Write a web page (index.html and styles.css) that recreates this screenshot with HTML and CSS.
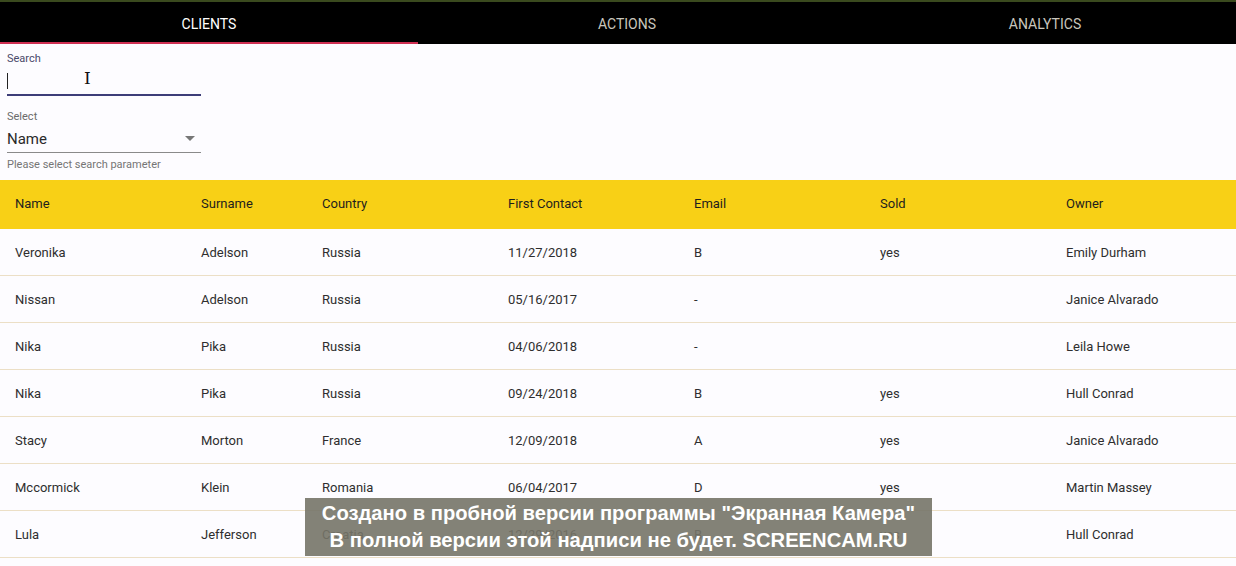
FILE: index.html
```html
<!DOCTYPE html>
<html>
<head>
<meta charset="utf-8">
<link rel="stylesheet" href="styles.css">
</head>
<body>
<div class="page">
  <nav class="tabs">
    <div class="tab active">Clients</div>
    <div class="tab">Actions</div>
    <div class="tab">Analytics</div>
  </nav>
  <form class="filters">
    <div class="field">
      <label class="label label-search">Search</label>
      <div class="input-row input-active"><span class="caret"></span><span class="ibeam">I</span></div>
    </div>
    <div class="field field-select">
      <label class="label">Select</label>
      <div class="input-row select-row"><span class="select-value">Name</span><span class="arrow"></span></div>
      <div class="helper">Please select search parameter</div>
    </div>
  </form>
  <table class="grid">
    <colgroup>
      <col class="c-wide"><col class="c-narrow"><col class="c-wide"><col class="c-wide"><col class="c-wide"><col class="c-wide"><col>
    </colgroup>
    <thead>
      <tr><th>Name</th><th>Surname</th><th>Country</th><th>First Contact</th><th>Email</th><th>Sold</th><th>Owner</th></tr>
    </thead>
    <tbody>
      <tr><td>Veronika</td><td>Adelson</td><td>Russia</td><td>11/27/2018</td><td>B</td><td>yes</td><td>Emily Durham</td></tr>
      <tr><td>Nissan</td><td>Adelson</td><td>Russia</td><td>05/16/2017</td><td>-</td><td></td><td>Janice Alvarado</td></tr>
      <tr><td>Nika</td><td>Pika</td><td>Russia</td><td>04/06/2018</td><td>-</td><td></td><td>Leila Howe</td></tr>
      <tr><td>Nika</td><td>Pika</td><td>Russia</td><td>09/24/2018</td><td>B</td><td>yes</td><td>Hull Conrad</td></tr>
      <tr><td>Stacy</td><td>Morton</td><td>France</td><td>12/09/2018</td><td>A</td><td>yes</td><td>Janice Alvarado</td></tr>
      <tr><td>Mccormick</td><td>Klein</td><td>Romania</td><td>06/04/2017</td><td>D</td><td>yes</td><td>Martin Massey</td></tr>
      <tr><td>Lula</td><td>Jefferson</td><td>Croatia</td><td>12/29/2016</td><td>B</td><td>yes</td><td>Hull Conrad</td></tr>
    </tbody>
  </table>
  <div class="watermark">
    <div>Создано в пробной версии программы "Экранная Камера"</div>
    <div>В полной версии этой надписи не будет. SCREENCAM.RU</div>
  </div>
</div>
</body>
</html>
```
FILE: styles.css
```css
html, body {
  margin: 0;
  padding: 0;
  background: #fdfcff;
  overflow: hidden;
}
.page {
  position: relative;
  width: 1236px;
  height: 566px;
  overflow: hidden;
  font-family: Roboto, "Liberation Sans", Arial, sans-serif;
  color: #2a2a2a;
}
.tabs {
  display: grid;
  grid-template-columns: 418px 418px 418px;
  height: 42px;
  background: #000;
  border-top: 2px solid #3a4a1e;
}
.tab {
  display: flex;
  align-items: center;
  justify-content: center;
  text-transform: uppercase;
  font-size: 14px;
  color: #c9c6bc;
  padding-top: 3px;
  border-bottom: 2px solid transparent;
}
.tab.active {
  color: #fff;
  border-bottom-color: #cf2f52;
}
.filters {
  display: flex;
  flex-direction: column;
  padding: 8px 0 0 7px;
  height: 129px;
  box-sizing: border-box;
  margin: 0;
}
.field {
  width: 194px;
}
.label {
  display: block;
  font-size: 11px;
  line-height: 13px;
  color: #6b6b6b;
}
.label-search {
  color: #4a4a6a;
}
.input-row {
  height: 27px;
  position: relative;
  border-bottom: 1px solid #8a8a8a;
  display: flex;
  align-items: center;
}
.input-active {
  height: 27px;
  border-bottom: 2px solid #3d3d78;
  margin-top: 2px;
}
.caret {
  width: 1px;
  height: 16px;
  background: #222;
  margin-top: 0;
}
.ibeam {
  position: absolute;
  left: 77px;
  top: 3px;
  font-family: "DejaVu Serif", serif;
  font-size: 17px;
  color: #111;
  line-height: 17px;
}
.field-select {
  margin-top: 14px;
}
.select-row {
  height: 27px;
  padding-top: 2px;
  justify-content: space-between;
}
.select-value {
  font-size: 15px;
  color: #2a2a2a;
}
.arrow {
  width: 0;
  height: 0;
  border-left: 5px solid transparent;
  border-right: 5px solid transparent;
  border-top: 5px solid #777;
  margin-right: 6px;
}
.helper {
  font-size: 11px;
  color: #757575;
  margin-top: 5px;
  white-space: nowrap;
}
.grid {
  border-collapse: collapse;
  width: 1236px;
  table-layout: fixed;
  margin-top: 7px;
}
.c-wide { width: 186px; }
.c-narrow { width: 121px; }
.grid th {
  background: #f8d016;
  height: 49px;
  text-align: left;
  font-weight: 400;
  font-size: 13px;
  color: #1e1e1e;
  padding: 0 0 2px 15px;
  box-sizing: border-box;
}
.grid td {
  height: 46px;
  font-size: 13px;
  color: #2e2e2e;
  padding: 0 0 0 15px;
  border-bottom: 1px solid #ecdfc6;
}
.watermark {
  position: absolute;
  left: 305px;
  top: 498px;
  width: 627px;
  height: 58px;
  background: rgba(118, 116, 104, 0.9);
  color: #fff;
  font-family: "Liberation Sans", Arial, sans-serif;
  font-weight: 700;
  font-size: 20.2px;
  line-height: 27px;
  text-align: center;
  display: flex;
  flex-direction: column;
  justify-content: center;
  white-space: nowrap;
}
```
